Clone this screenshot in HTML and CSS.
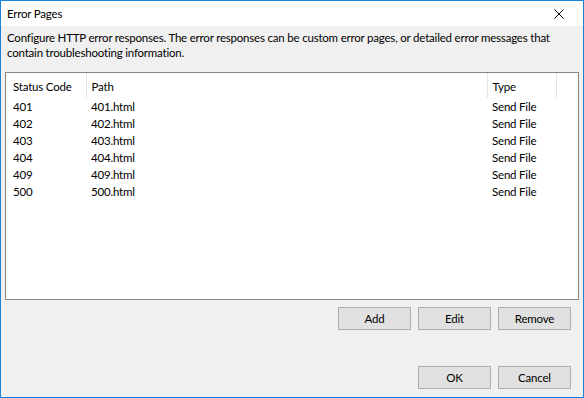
FILE: index.html
```html
<!DOCTYPE html>
<html lang="en">
<head>
    <meta charset="UTF-8">
    <meta name="viewport" content="width=device-width, initial-scale=1.0">
    <title>Error Pages</title>
    <link rel="stylesheet" href="styles.css">
</head>
<body>
    <div class="window">
        <div class="titlebar">
            <span class="title">Error Pages</span>
            <button class="close" title="Close">
                <svg width="10" height="10" viewBox="0 0 10 10">
                    <path d="M0.5 0.5 L9.5 9.5 M9.5 0.5 L0.5 9.5" stroke="#000" stroke-width="1" fill="none"/>
                </svg>
            </button>
        </div>

        <div class="content">
            <p class="desc">Configure HTTP error responses. The error responses can be custom error pages, or detailed error messages that contain troubleshooting information.</p>

            <!-- list of configured error pages -->
            <div class="listview">
                <table>
                    <thead>
                        <tr>
                            <th class="col-code">Status Code</th>
                            <th class="col-path">Path</th>
                            <th class="col-type">Type</th>
                            <th class="col-rest"></th>
                        </tr>
                    </thead>
                    <tbody>
                        <tr><td>401</td><td>401.html</td><td>Send File</td><td></td></tr>
                        <tr><td>402</td><td>402.html</td><td>Send File</td><td></td></tr>
                        <tr><td>403</td><td>403.html</td><td>Send File</td><td></td></tr>
                        <tr><td>404</td><td>404.html</td><td>Send File</td><td></td></tr>
                        <tr><td>409</td><td>409.html</td><td>Send File</td><td></td></tr>
                        <tr><td>500</td><td>500.html</td><td>Send File</td><td></td></tr>
                    </tbody>
                </table>
            </div>

            <div class="actions">
                <button class="btn">Add</button>
                <button class="btn">Edit</button>
                <button class="btn">Remove</button>
            </div>

            <div class="footer">
                <button class="btn">OK</button>
                <button class="btn">Cancel</button>
            </div>
        </div>
    </div>
</body>
</html>
```

FILE: styles.css
```css
body {
    margin: 0;
    padding: 0;
    font-family: Lato, "Noto Sans", sans-serif;
    font-size: 11.5px;
    letter-spacing: -0.2px;
    color: #000;
}

.window {
    width: 584px;
    height: 398px;
    box-sizing: border-box;
    border: 1px solid #1883d7;
    background-color: #f0f0f0;
    display: flex;
    flex-direction: column;
}

.titlebar {
    height: 25px;
    background-color: #fff;
    display: flex;
    align-items: center;
    justify-content: space-between;
    padding-left: 6px;
}

.close {
    width: 46px;
    height: 25px;
    border: none;
    background: none;
    padding: 0;
    display: flex;
    align-items: center;
    justify-content: center;
    margin-right: 1px;
}

.content {
    flex: 1;
    display: flex;
    flex-direction: column;
}

.desc {
    margin: 4px 0 0 6px;
    line-height: 15px;
    height: 30px;
    width: 556px;
}

.listview {
    margin: 12px 4px 0 4px;
    height: 228px;
    box-sizing: border-box;
    border: 1px solid #828790;
    background-color: #fff;
}

table {
    border-collapse: collapse;
    width: 100%;
}

th {
    font-weight: normal;
    text-align: left;
    height: 25px;
    line-height: 15px;
    padding: 1px 5px 0;
    border-right: 1px solid #e5e5e5;
    box-sizing: border-box;
}

th.col-rest {
    border-right: none;
}

.col-code {
    width: 80px;
    padding-left: 7px;
}

.col-path {
    width: 401px;
}

.col-type {
    width: 69px;
}

td {
    height: 17px;
    padding: 0 5px;
    line-height: 17px;
}

td:first-child {
    padding-left: 7px;
}

.actions,
.footer {
    display: flex;
    justify-content: flex-end;
    gap: 7px;
    padding-right: 12px;
}

.actions {
    margin-top: 7px;
}

.footer {
    margin-top: auto;
    margin-bottom: 8px;
}

.btn {
    width: 73px;
    height: 23px;
    box-sizing: border-box;
    border: 1px solid #adadad;
    background-color: #e1e1e1;
    font-family: inherit;
    font-size: 11.5px;
    letter-spacing: -0.2px;
    color: #000;
    padding: 0;
}
```
